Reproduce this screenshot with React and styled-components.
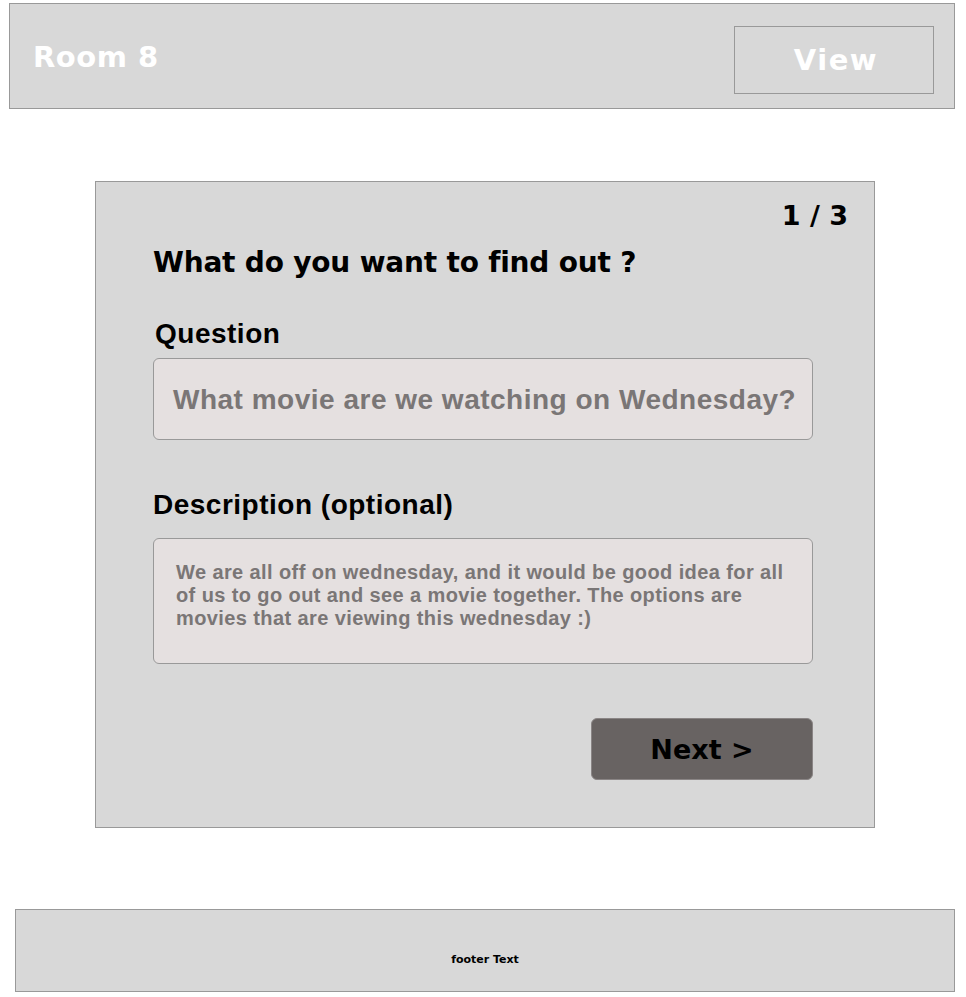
import React from 'react';
import styled, { createGlobalStyle } from 'styled-components';

const GlobalStyle = createGlobalStyle`
  body {
    margin: 0;
    background: #ffffff;
    font-family: "Liberation Sans", Arial, sans-serif;
  }
`

const Page = styled.div`
  width: 966px;
  display: flex;
  flex-direction: column;
`

const Header = styled.header`
  margin: 3px 0 0 9px;
  width: 946px;
  height: 106px;
  background: #d8d8d8;
  border: 1px solid #999999;
  display: flex;
  align-items: center;
  justify-content: space-between;
  padding: 0 20px 0 23px;
  box-sizing: border-box;
`

const RoomTitle = styled.h1`
  margin: 1px 0 0 0;
  color: #ffffff;
  font-family: "DejaVu Sans", sans-serif;
  font-weight: 700;
  font-size: 29px;
  letter-spacing: 0.5px;
`

const ViewButton = styled.button`
  width: 200px;
  height: 68px;
  margin-top: 7px;
  background: transparent;
  border: 1px solid #999999;
  color: #ffffff;
  font-family: "DejaVu Sans", sans-serif;
  font-weight: 700;
  font-size: 29px;
  letter-spacing: 1.5px;
  padding: 0 0 0 4px;
`

const Card = styled.main`
  margin: 72px 0 0 95px;
  width: 780px;
  height: 647px;
  box-sizing: border-box;
  background: #d8d8d8;
  border: 1px solid #999999;
  display: flex;
  flex-direction: column;
  padding: 18px 26px 0 57px;
`

const Step = styled.div`
  align-self: flex-end;
  font-family: "DejaVu Sans", sans-serif;
  font-weight: 700;
  font-size: 27px;
  line-height: 32px;
  color: #000000;
`

const Heading = styled.h2`
  margin: 15px 0 0 0;
  font-family: "DejaVu Sans", sans-serif;
  font-weight: 700;
  font-size: 28px;
  line-height: 32px;
  letter-spacing: -0.2px;
  color: #000000;
`

const Label = styled.label`
  display: block;
  margin: ${p => p.$top}px 0 0 ${p => p.$indent || 0}px;
  font-weight: 700;
  font-size: 28px;
  line-height: 32px;
  letter-spacing: 0.5px;
  color: #000000;
`

const Field = styled.div`
  margin-top: ${p => p.$top}px;
  width: 660px;
  height: ${p => p.$height}px;
  box-sizing: border-box;
  background: #e5e0e0;
  border: 1px solid #999999;
  border-radius: 6px;
  color: #7a7676;
  font-weight: 700;
`

const QuestionField = styled(Field)`
  display: flex;
  align-items: center;
  padding: 2px 0 0 19px;
  font-size: 28px;
  letter-spacing: 0.5px;
`

const DescriptionField = styled(Field)`
  padding: 22px 20px 0 22px;
  font-size: 20px;
  line-height: 23px;
  letter-spacing: 0.4px;
`

const Actions = styled.div`
  margin-top: 54px;
  width: 660px;
  display: flex;
  justify-content: flex-end;
`

const NextButton = styled.button`
  width: 222px;
  height: 62px;
  background: #686362;
  border: 1px solid #8a8585;
  border-radius: 6px;
  font-family: "DejaVu Sans", sans-serif;
  font-weight: 700;
  font-size: 27px;
  color: #000000;
  padding: 0;
`

const Footer = styled.footer`
  margin: 81px 0 0 15px;
  width: 940px;
  height: 83px;
  box-sizing: border-box;
  background: #d8d8d8;
  border: 1px solid #999999;
  display: flex;
  align-items: center;
  justify-content: center;
  padding: 17px 0 0 0;
`

const FooterText = styled.span`
  font-family: "DejaVu Sans", sans-serif;
  font-weight: 700;
  font-size: 11px;
  color: #000000;
`

export default function App() {
  return (
    <Page>
      <GlobalStyle />
      <Header>
        <RoomTitle>Room 8</RoomTitle>
        <ViewButton>View</ViewButton>
      </Header>
      <Card>
        <Step>1 / 3</Step>
        <Heading>What do you want to find out ?</Heading>
        <Label $top={39} $indent={2}>Question</Label>
        <QuestionField $top={8} $height={82}>What movie are we watching on Wednesday?</QuestionField>
        <Label $top={49}>Description (optional)</Label>
        <DescriptionField $top={17} $height={126}>
          We are all off on wednesday, and it would be good idea for all of us to go out and see a movie together. The options are movies that are viewing this wednesday :)
        </DescriptionField>
        <Actions>
          <NextButton>Next &gt;</NextButton>
        </Actions>
      </Card>
      <Footer>
        <FooterText>footer Text</FooterText>
      </Footer>
    </Page>
  )
}
